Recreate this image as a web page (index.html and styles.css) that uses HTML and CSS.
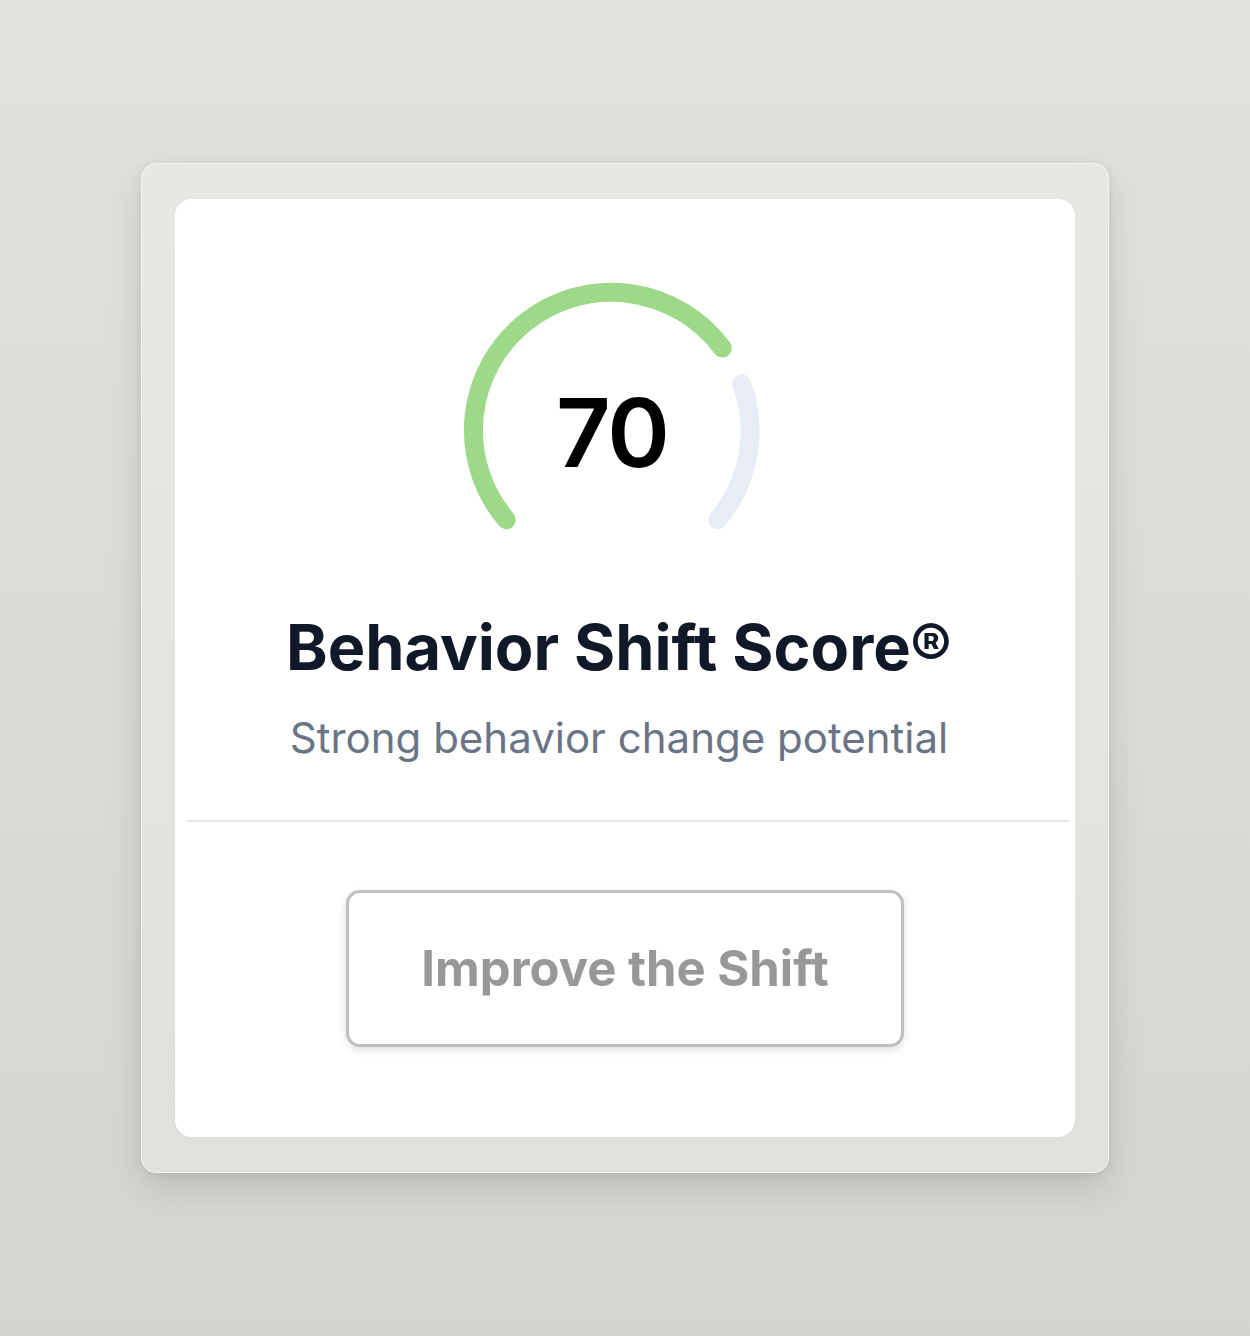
FILE: index.html
```html
<!DOCTYPE html>
<html lang="en">
<head>
  <meta charset="UTF-8" />
  <meta name="viewport" content="width=device-width, initial-scale=1.0"/>
  <title>Behavior Shift Score</title>
  <link rel="stylesheet" href="styles.css">
</head>
<body>
  <div class="frame">
    <div class="card">
      <div class="gauge-row">
        <div class="gauge">
          <svg class="gauge-ring" width="300" height="300" viewBox="0 0 300 300">
            <!-- 260deg gauge (140deg to 40deg), 70% filled -->
            <path class="track" d="M 279.7 102.8 A 138 138 0 0 1 255.7 238.7" />
            <path class="fill" d="M 44.3 238.7 A 138 138 0 1 1 260.2 67.0" />
          </svg>
          <div class="gauge-value">70</div>
        </div>
      </div>

      <div class="score-text">
        <h1 class="score-title">Behavior Shift Score®</h1>
        <p class="score-sub">Strong behavior change potential</p>
      </div>

      <hr class="divider">

      <div class="actions">
        <button class="improve-btn">Improve the Shift</button>
      </div>
    </div>
  </div>
</body>
</html>
```

FILE: styles.css
```css
html, body {
  margin: 0;
  height: 100%;
}
body {
  font-family: Inter, "Noto Sans", sans-serif;
  background: linear-gradient(180deg, #dfe2dd 0%, #d3d5d0 100%);
  display: flex;
  align-items: center;
  justify-content: center;
}
.frame {
  width: 900px;
  padding: 35px 33px;
  background: linear-gradient(180deg, #e7e8e4 0%, #e0e1dd 100%);
  border: 1px solid #f4f5f2;
  border-radius: 15px;
  box-shadow: 0 14px 36px rgba(0,0,0,0.12), 0 2px 8px rgba(0,0,0,0.06);
}
.card {
  background: #fff;
  border-radius: 17px;
  padding: 82px 12px 90px;
  text-align: center;
}
.gauge-row {
  display: flex;
  justify-content: center;
  padding-right: 26px;
}
.gauge {
  display: grid;
  place-items: center;
  width: 300px;
  height: 300px;
}
.gauge-ring,
.gauge-value {
  grid-area: 1 / 1;
}
.gauge-ring path {
  fill: none;
  stroke-width: 19;
  stroke-linecap: round;
}
.gauge-ring .fill {
  stroke: #9ed98a;
}
.gauge-ring .track {
  stroke: #e8ecf4;
}
.gauge-value {
  font-size: 95px;
  font-weight: 600;
  color: #000;
  letter-spacing: -2px;
  line-height: 1;
  padding-top: 4px;
}
.score-text {
  padding-right: 12px;
}
.score-title {
  margin: 29px 0 0;
  font-size: 63px;
  font-weight: 700;
  color: #111827;
  line-height: 1.2;
}
.score-sub {
  margin: 28px 0 0;
  font-size: 42px;
  color: #6b7484;
  line-height: 1.2;
}
.divider {
  border: none;
  border-top: 2px solid #e4e4e4;
  margin: 57px -6px 0 0;
}
.actions {
  padding-top: 68px;
  display: flex;
  justify-content: center;
}
.improve-btn {
  width: 558px;
  height: 157px;
  background: #fff;
  border: 3px solid #bfbfbf;
  border-radius: 14px;
  box-shadow: 0 3px 8px rgba(0,0,0,0.12);
  font-family: Inter, "Noto Sans", sans-serif;
  font-size: 49px;
  font-weight: 700;
  color: #989898;
  cursor: pointer;
}
```
